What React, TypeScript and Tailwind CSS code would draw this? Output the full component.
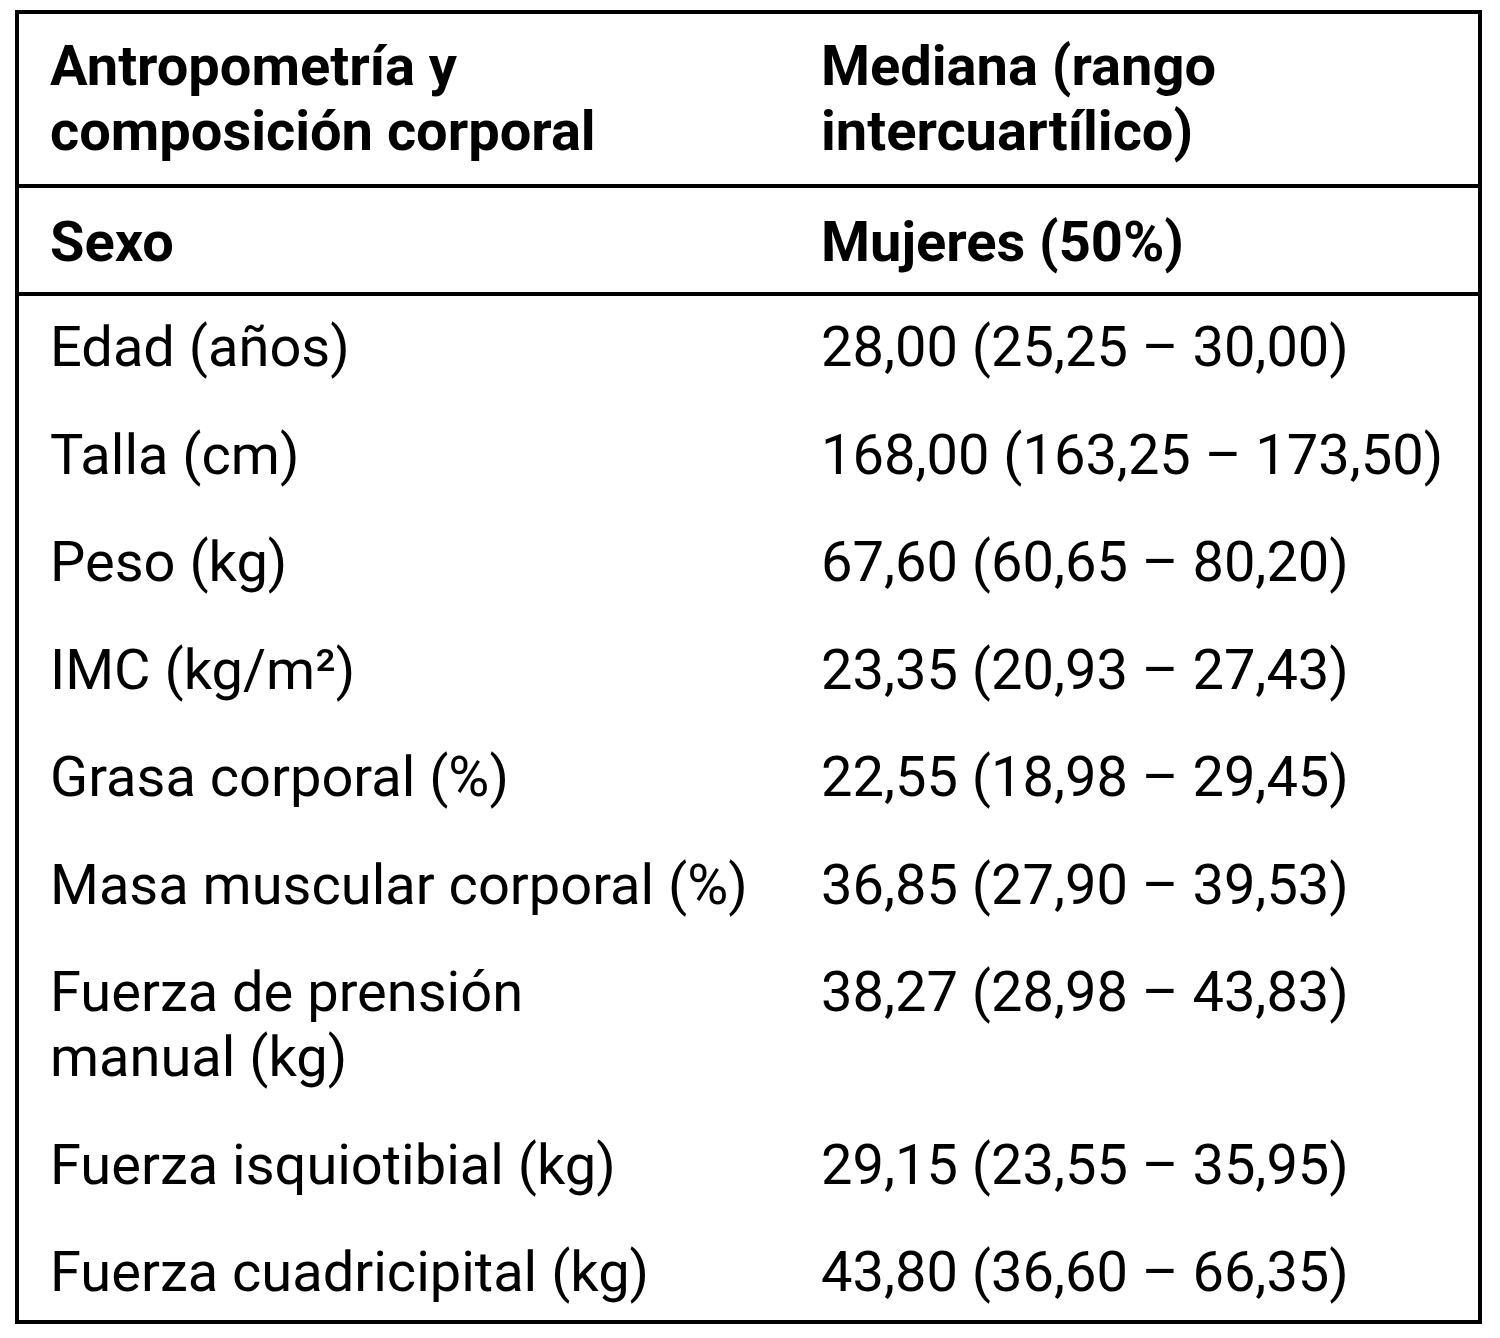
const rows: [string[], string][] = [
  [['Edad (años)'], '28,00 (25,25 – 30,00)'],
  [['Talla (cm)'], '168,00 (163,25 – 173,50)'],
  [['Peso (kg)'], '67,60 (60,65 – 80,20)'],
  [['IMC (kg/m²)'], '23,35 (20,93 – 27,43)'],
  [['Grasa corporal (%)'], '22,55 (18,98 – 29,45)'],
  [['Masa muscular corporal (%)'], '36,85 (27,90 – 39,53)'],
  [['Fuerza de prensión', 'manual (kg)'], '38,27 (28,98 – 43,83)'],
  [['Fuerza isquiotibial (kg)'], '29,15 (23,55 – 35,95)'],
  [['Fuerza cuadricipital (kg)'], '43,80 (36,60 – 66,35)'],
];

export default function App() {
  return (
    <div className="min-h-[1338px] bg-white pt-[10px] pl-[15px] text-black" style={{ fontFamily: 'Roboto, "Noto Sans", sans-serif' }}>
      <div className="w-[1467px] border-4 border-black text-[56px] leading-[65px]">
        {/* cabecera */}
        <div className="flex border-b-4 border-black font-bold">
          <div className="w-[772px] pl-[31px] py-5">
            <div>Antropometría y</div>
            <div>composición corporal</div>
          </div>
          <div className="flex-1 pl-[30px] py-5">
            <div>Mediana (rango</div>
            <div>intercuartílico)</div>
          </div>
        </div>

        <div className="flex border-b-4 border-black font-bold">
          <div className="w-[772px] pl-[31px] pt-[22px] pb-[17px]">Sexo</div>
          <div className="flex-1 pl-[30px] pt-[22px] pb-[17px]">Mujeres (50%)</div>
        </div>

        {rows.map(([label, value], i) => (
          <div key={i} className={`flex pt-[19px] ${i === rows.length - 1 ? 'pb-[15px]' : 'pb-[23.5px]'}`}>
            <div className="w-[772px] pl-[31px]">
              {label.map((l) => (
                <div key={l}>{l}</div>
              ))}
            </div>
            <div className="flex-1 pl-[30px] whitespace-nowrap">{value}</div>
          </div>
        ))}
      </div>
    </div>
  );
}
